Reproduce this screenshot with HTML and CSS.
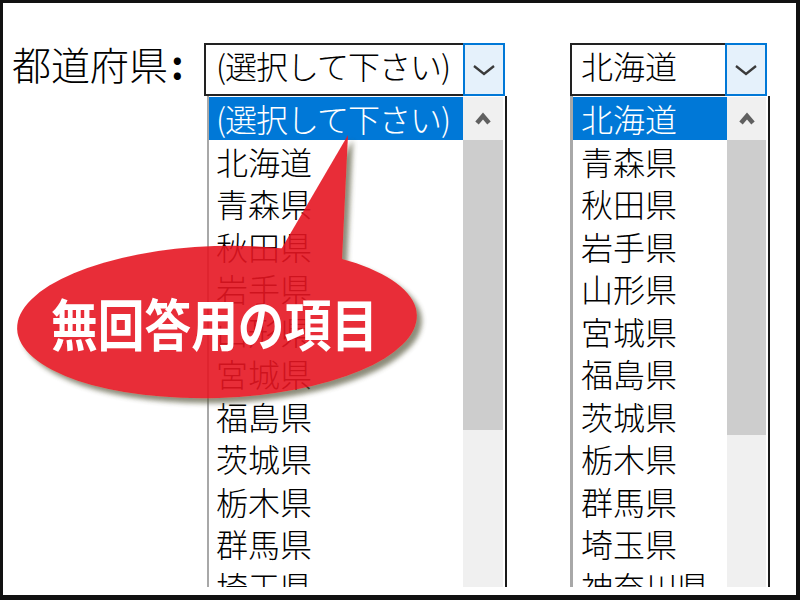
FILE: index.html
```html
<!DOCTYPE html>
<html lang="ja">
<head>
<meta charset="utf-8">
<title>都道府県</title>
<link rel="stylesheet" href="styles.css">
</head>
<body>
<div class="frame">
  <div class="row">
    <div class="label">都道府県<span class="colon">:</span></div>

    <div class="combo combo1">
      <div class="select">
        <div class="select-text"><span class="narrow">(選択して下さい)</span></div>
        <div class="select-btn">
          <svg class="chev-down" viewBox="0 0 22 12" width="22" height="12"><polyline points="1,2 11,10 21,2"/></svg>
        </div>
      </div>
      <div class="list">
        <div class="items">
          <div class="item selected"><span class="narrow">(選択して下さい)</span></div>
          <div class="item">北海道</div>
          <div class="item">青森県</div>
          <div class="item">秋田県</div>
          <div class="item">岩手県</div>
          <div class="item">山形県</div>
          <div class="item">宮城県</div>
          <div class="item">福島県</div>
          <div class="item">茨城県</div>
          <div class="item">栃木県</div>
          <div class="item">群馬県</div>
          <div class="item">埼玉県</div>
        </div>
        <div class="scroll">
          <div class="arrow">
            <svg class="chev-up" viewBox="0 0 16 14" width="16" height="14"><polyline points="2,11 8,4 14,11"/></svg>
          </div>
          <div class="thumb"></div>
        </div>
      </div>
    </div>

    <div class="combo combo2">
      <div class="select">
        <div class="select-text">北海道</div>
        <div class="select-btn">
          <svg class="chev-down" viewBox="0 0 22 12" width="22" height="12"><polyline points="1,2 11,10 21,2"/></svg>
        </div>
      </div>
      <div class="list">
        <div class="items">
          <div class="item selected">北海道</div>
          <div class="item">青森県</div>
          <div class="item">秋田県</div>
          <div class="item">岩手県</div>
          <div class="item">山形県</div>
          <div class="item">宮城県</div>
          <div class="item">福島県</div>
          <div class="item">茨城県</div>
          <div class="item">栃木県</div>
          <div class="item">群馬県</div>
          <div class="item">埼玉県</div>
          <div class="item">神奈川県</div>
        </div>
        <div class="scroll">
          <div class="arrow">
            <svg class="chev-up" viewBox="0 0 16 14" width="16" height="14"><polyline points="2,11 8,4 14,11"/></svg>
          </div>
          <div class="thumb"></div>
        </div>
      </div>
    </div>
  </div>

  <svg class="callout" viewBox="0 0 800 600" width="800" height="600">
    <defs>
      <filter id="sh" x="-10%" y="-10%" width="130%" height="140%">
        <feGaussianBlur in="SourceAlpha" stdDeviation="2.5"/>
        <feOffset dx="5" dy="5" result="b"/>
        <feFlood flood-color="#55553a" flood-opacity="0.75"/>
        <feComposite in2="b" operator="in" result="s"/>
        <feMerge><feMergeNode in="s"/><feMergeNode in="SourceGraphic"/></feMerge>
      </filter>
    </defs>
    <g class="bubble" filter="url(#sh)">
      <ellipse cx="217" cy="322" rx="200" ry="76" transform="rotate(-2 217 322)"/>
      <polygon points="348,135 341,282 262,282"/>
    </g>
    <text class="callout-text" x="51" y="321" textLength="327" lengthAdjust="spacingAndGlyphs">無回答用の項目</text>
  </svg>
</div>
</body>
</html>
```

FILE: styles.css
```css
html, body {
  margin: 0;
  padding: 0;
  background: #fff;
}

body {
  font-family: "Noto Sans CJK JP", "Noto Sans", sans-serif;
  font-weight: 300;
  color: #000;
}

.frame {
  position: relative;
  width: 800px;
  height: 600px;
  box-sizing: border-box;
  border-style: solid;
  border-color: #111;
  border-width: 3px 4px 5px 3px;
  background: #fff;
  overflow: hidden;
}

.row {
  display: flex;
  align-items: flex-start;
  padding: 40px 0 0 9px;
}

.label {
  width: 192px;
  font-size: 39px;
  line-height: 40px;
  white-space: nowrap;
}

.colon {
  font-weight: 700;
  padding-left: 3px;
}

.combo {
  display: flex;
  flex-direction: column;
}

.combo1 {
  width: 303px;
}

.combo2 {
  width: 200px;
  margin-left: 63px;
}

.select {
  display: flex;
  height: 53px;
  box-sizing: border-box;
}

.combo1 .select {
  width: 301px;
}

.combo2 .select {
  width: 197px;
}

.select-text {
  flex: 1;
  box-sizing: border-box;
  border: 2px solid #222;
  border-right: none;
  font-size: 32px;
  line-height: 41px;
  padding-left: 10px;
  white-space: nowrap;
  overflow: hidden;
}

.combo2 .select-text {
  padding-left: 9px;
}

.narrow {
  letter-spacing: -1px;
}

.select-btn {
  width: 42px;
  box-sizing: border-box;
  border: 2px solid #0078d7;
  background: #e5f1fb;
  display: flex;
  align-items: center;
  justify-content: center;
}

.chev-down polyline {
  fill: none;
  stroke: #3a3a3a;
  stroke-width: 2.3;
}

.list {
  display: flex;
  height: 491px;
  box-sizing: border-box;
  padding-top: 1px;
  border-right: 2px solid #1a1a1a;
  background: #fff;
}

.combo1 .list {
  width: 300px;
  margin-left: 3px;
  border-left: 2px solid #a8a8a8;
}

.combo2 .list {
  width: 200px;
  border-left: 3px solid #a8a8a8;
}

.items {
  flex: 1;
  overflow: hidden;
}

.item {
  height: 42.5px;
  line-height: 42.5px;
  font-size: 32px;
  padding-left: 7px;
  white-space: nowrap;
}

.combo2 .item {
  padding-left: 8px;
}

.item.selected {
  background: #0078d7;
  color: #fff;
}

.scroll {
  margin-right: 2px;
  background: #f0f0f0;
  display: flex;
  flex-direction: column;
}

.combo1 .scroll {
  width: 40px;
}

.combo2 .scroll {
  width: 39px;
}

.arrow {
  height: 43px;
  display: flex;
  align-items: center;
  justify-content: center;
}

.chev-up polyline {
  fill: none;
  stroke: #606060;
  stroke-width: 4.5;
}

.thumb {
  background: #cdcdcd;
}

.combo1 .thumb {
  height: 290px;
}

.combo2 .thumb {
  height: 295px;
}

.callout {
  position: absolute;
  left: -3px;
  top: -3px;
  pointer-events: none;
}

.bubble {
  fill: rgb(230, 25, 35);
  opacity: 0.9;
}

.callout-text {
  font-family: "Noto Sans CJK JP", sans-serif;
  font-size: 56px;
  font-weight: 700;
  fill: #fff;
  dominant-baseline: central;
}
```
